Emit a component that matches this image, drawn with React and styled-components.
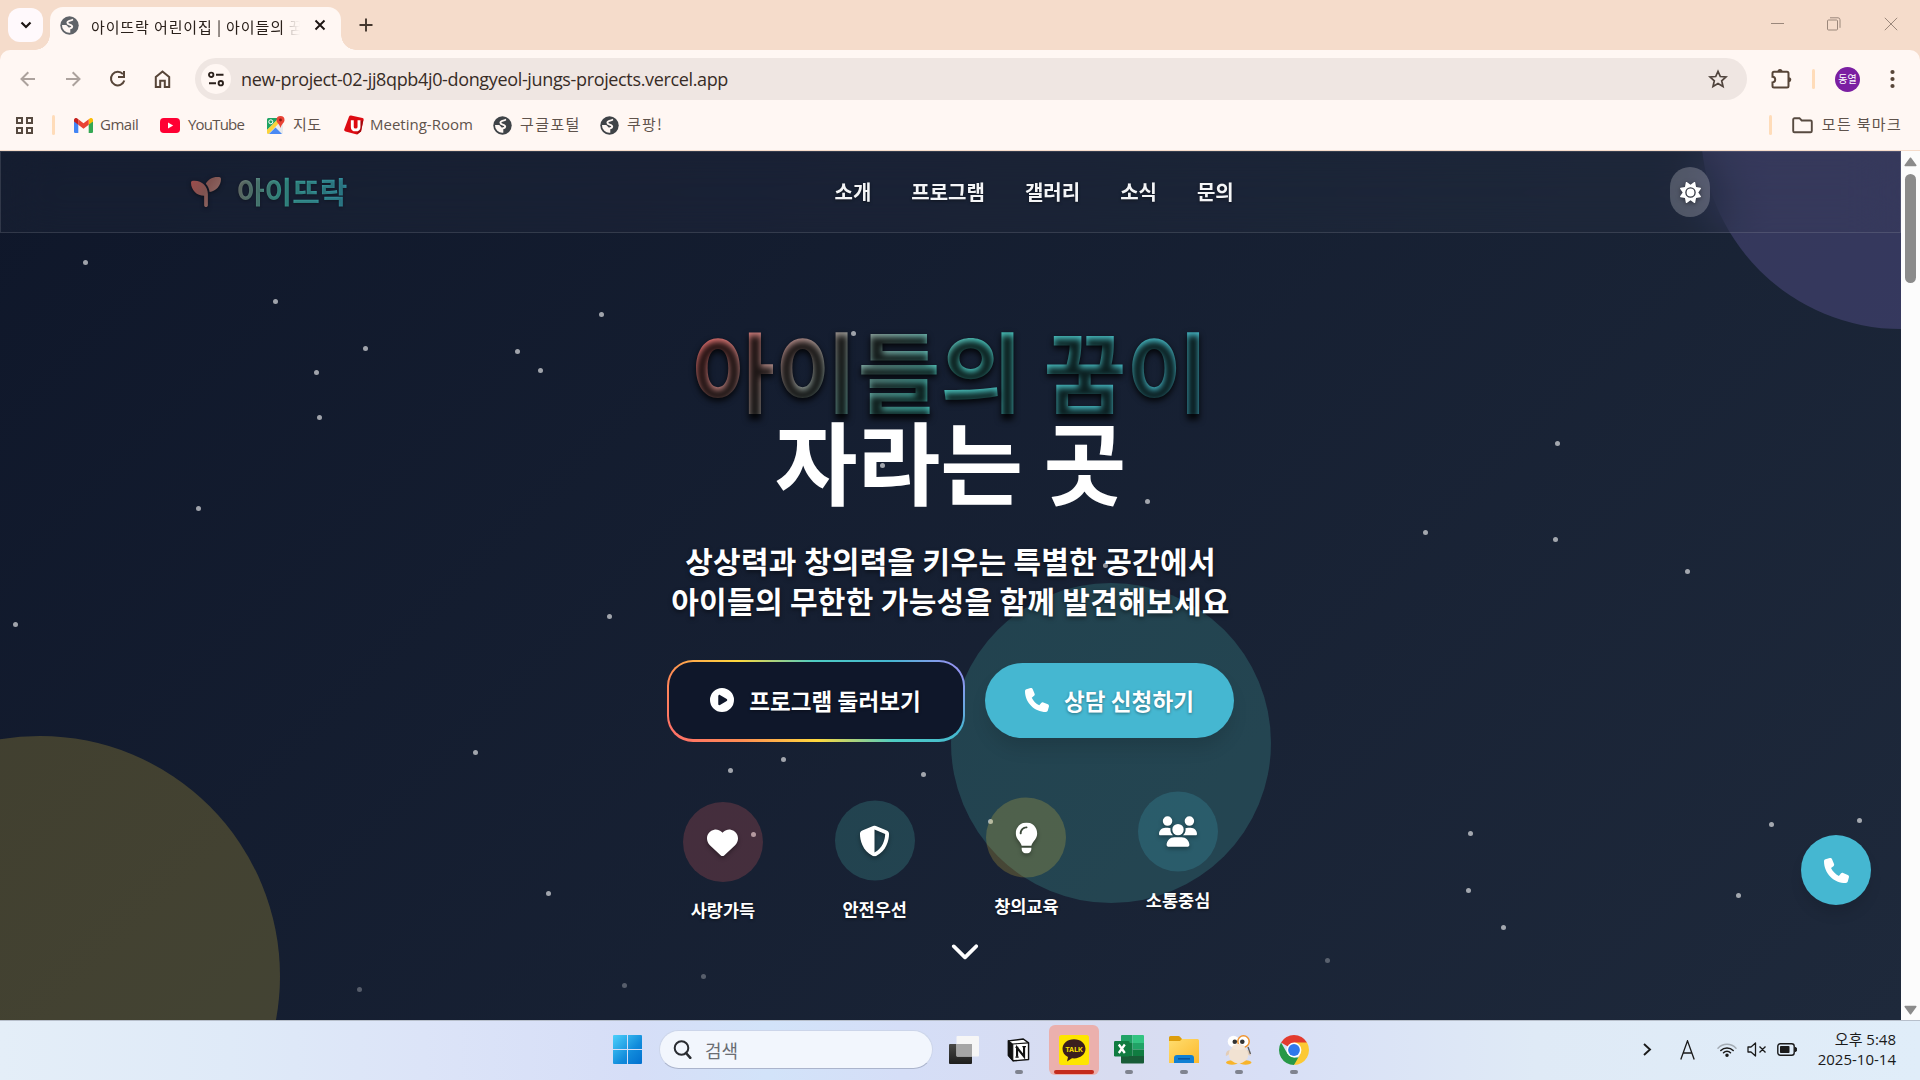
import React from 'react';
import styled, { createGlobalStyle, css } from 'styled-components';
import {
  FaSeedling, FaSun, FaCirclePlay, FaPhone, FaHeart, FaShieldHalved,
  FaLightbulb, FaUsers, FaChevronDown,
} from 'react-icons/fa6';

const UI_FONT = '"Open Sans", "Noto Sans CJK KR", sans-serif';
const KR_FONT = '"Noto Sans CJK KR", "Noto Sans", sans-serif';

const GlobalStyle = createGlobalStyle`
  * { box-sizing: border-box; }
  body { margin: 0; background: #0f172a; overflow: hidden; }
  svg { display: block; flex: none; }
`;

const Screen = styled.div`
  width: 1920px;
  height: 1080px;
  display: flex;
  flex-direction: column;
  overflow: hidden;
  font-family: ${UI_FONT};
`;

/* ---------- browser chrome ---------- */

const TabStrip = styled.div`
  height: 50px;
  background: #f5dccb;
  display: flex;
  align-items: flex-end;
  padding-left: 8px;
`;

const TabSearch = styled.div`
  width: 35px;
  height: 34px;
  margin: 0 7px 8px 0;
  border-radius: 12px;
  background: #fff9fc;
  display: flex;
  align-items: center;
  justify-content: center;
`;

const Tab = styled.div`
  position: relative;
  width: 291px;
  height: 43px;
  padding: 0 15px 7px 10px;
  border-radius: 13px 13px 0 0;
  background: #fff7f3;
  display: flex;
  align-items: center;
  &::before, &::after {
    content: '';
    position: absolute;
    bottom: 0;
    width: 15px;
    height: 15px;
  }
  &::before {
    left: -15px;
    background: radial-gradient(circle at 0 0, transparent 14.5px, #fff7f3 15px);
  }
  &::after {
    right: -15px;
    background: radial-gradient(circle at 100% 0, transparent 14.5px, #fff7f3 15px);
  }
`;

const TabTitle = styled.div`
  flex: 1;
  margin: 2px 14px 0 12px;
  overflow: hidden;
  white-space: nowrap;
  font-family: ${KR_FONT};
  font-weight: 400;
  font-size: 15px;
  letter-spacing: 0.88px;
  color: #2a201a;
  -webkit-mask-image: linear-gradient(90deg, #000 92%, rgba(0, 0, 0, 0.25) 95%, transparent 100%);
  mask-image: linear-gradient(90deg, #000 92%, rgba(0, 0, 0, 0.25) 95%, transparent 100%);
`;

const NewTab = styled.div`
  margin: 0 0 18px 18px;
`;

const WindowButtons = styled.div`
  margin-left: auto;
  align-self: flex-start;
  display: flex;
  gap: 43px;
  padding: 17px 22px 0 0;
  color: #9a877b;
`;

const ToolbarWrap = styled.div`
  height: 100px;
  background: #f5dccb;
`;

const Toolbar = styled.div`
  height: 100%;
  border-radius: 10px 10px 0 0;
  background: #fff7f3;
`;

const AddressRow = styled.div`
  height: 58px;
  display: flex;
  align-items: center;
  padding: 0 25px 0 18px;
`;

const NavIcons = styled.div`
  display: flex;
  gap: 25px;
  margin-right: 22px;
`;

const AddressBar = styled.div`
  flex: 1;
  height: 42px;
  border-radius: 21px;
  background: #efe6e2;
  display: flex;
  align-items: center;
  margin-right: 23px;
  padding: 0 19px 0 6px;
`;

const SiteInfo = styled.div`
  width: 30px;
  height: 30px;
  border-radius: 50%;
  background: #fff7f3;
  display: flex;
  align-items: center;
  justify-content: center;
`;

const Url = styled.div`
  flex: 1;
  margin-left: 10px;
  font-size: 18px;
  letter-spacing: -0.35px;
  color: #372c26;
`;

const Divider = styled.div`
  width: 3px;
  height: 20px;
  border-radius: 2px;
  background: #ffdcb9;
  margin: ${(p) => p.$margin || '0'};
`;

const Avatar = styled.div`
  width: 25px;
  height: 25px;
  border-radius: 50%;
  background: #7b1fa2;
  color: #fff;
  font-size: 10px;
  line-height: 24px;
  text-align: center;
  margin-right: 30px;
  white-space: nowrap;
`;

const BookmarkRow = styled.div`
  height: 34px;
  display: flex;
  align-items: center;
  padding: 0 18px 0 15px;
`;

const Bookmark = styled.div`
  display: flex;
  align-items: center;
  width: ${(p) => p.$width}px;
`;

const BookmarkText = styled.span`
  margin: -3px 0 0 ${(p) => p.$gap || 8}px;
  font-size: 15px;
  letter-spacing: ${(p) => p.$spacing || 0}px;
  color: #5f534c;
  white-space: nowrap;
  ${(p) => p.$kr && css`
    font-family: ${KR_FONT};
    font-weight: 400;
  `}
`;

/* ---------- web page ---------- */

const Viewport = styled.div`
  height: 870px;
  display: flex;
  border-top: 1px solid #f5dccb;
`;

const Page = styled.div`
  position: relative;
  flex: 1;
  overflow: hidden;
  background: linear-gradient(135deg, #0f172a 0%, #1e293b 100%);
  font-family: ${KR_FONT};
  color: #fff;
`;

const Backdrop = styled.div`
  position: absolute;
  inset: 0;
`;

const Orb = styled.div`
  position: absolute;
  left: ${(p) => p.$x - p.$r}px;
  top: ${(p) => p.$y - p.$r}px;
  width: ${(p) => p.$r * 2}px;
  height: ${(p) => p.$r * 2}px;
  border-radius: 50%;
  opacity: 0.2;
  background: ${(p) => p.$color};
`;

const Particle = styled.div`
  position: absolute;
  left: ${(p) => p.$x - 2.5}px;
  top: ${(p) => p.$y - 2.5}px;
  width: 5px;
  height: 5px;
  border-radius: 50%;
  background: rgba(255, 255, 255, ${(p) => (p.$dim ? 0.28 : 0.6)});
`;

const NavBar = styled.header`
  position: relative;
  height: 82px;
  padding: 0 190px;
  border: 1px solid rgba(255, 255, 255, 0.12);
  background: rgba(58, 70, 86, 0.15);
  backdrop-filter: blur(25px);
  display: flex;
  align-items: center;
`;

const Logo = styled.div`
  width: 643.5px;
  display: flex;
  align-items: center;
  font-size: 30px;
  line-height: 40px;
  font-weight: 700;
  padding-bottom: 1px;
`;

const LogoMark = styled.span`
  margin-right: 16px;
  filter: drop-shadow(0 1px 2px rgba(0, 0, 0, 0.5));
`;

const LogoText = styled.span`
  margin-top: -3px;
  background: linear-gradient(100deg, #7d7f78 0%, #3fa99f 40%, #3798ad 100%);
  -webkit-background-clip: text;
  background-clip: text;
  color: transparent;
  text-shadow: 0 1px 3px rgba(0, 0, 0, 0.3);
`;

const Menu = styled.nav`
  display: flex;
  gap: 40px;
  flex: 1;
  font-size: 20px;
  line-height: 30px;
  font-weight: 700;
  color: #f4f5f7;
  text-shadow: 0 1px 3px rgba(0, 0, 0, 0.5);
`;

const ThemeToggle = styled.button`
  width: 40px;
  height: 50px;
  padding: 0;
  border: 0;
  border-radius: 20px;
  background: rgba(255, 255, 255, 0.22);
  color: #fff;
  display: flex;
  align-items: center;
  justify-content: center;
  svg { filter: drop-shadow(0 1px 2px rgba(0, 0, 0, 0.5)); }
`;

const Hero = styled.main`
  position: relative;
  display: flex;
  flex-direction: column;
  align-items: center;
  padding-top: 91px;
`;

const Title = styled.h1`
  margin: 0;
  font-size: 90px;
  line-height: 90px;
  font-weight: 700;
  text-align: center;
`;

const TitleGradient = styled.span`
  display: block;
  background: linear-gradient(135deg, #ff6b6b, #4ecdc4, #45b7d1);
  -webkit-background-clip: text;
  background-clip: text;
  color: transparent;
  text-shadow: 0 3px 6px rgba(0, 0, 0, 0.85);
`;

const TitlePlain = styled.span`
  display: block;
`;

const Subtitle = styled.p`
  margin: 36px 0 40px;
  font-size: 30px;
  line-height: 40px;
  font-weight: 700;
  letter-spacing: 0.3px;
  text-align: center;
  text-shadow: 0 2px 4px rgba(0, 0, 0, 0.5);
`;

const Actions = styled.div`
  display: flex;
  align-items: center;
  gap: 20px;
  height: 82px;
`;

const button = css`
  border: 0;
  color: #fff;
  font-family: ${KR_FONT};
  font-size: 22.5px;
  font-weight: 700;
  letter-spacing: 0.1px;
  display: flex;
  align-items: center;
  justify-content: center;
  text-shadow: 0 1px 3px rgba(0, 0, 0, 0.4);
`;

const OutlineButton = styled.button`
  ${button}
  width: 298px;
  height: 82px;
  gap: 15px;
  padding: 0 1px 2px 0;
  border: 2px solid transparent;
  border-bottom-width: 3px;
  border-radius: 26px;
  background:
    linear-gradient(#0f172a, #0f172a) padding-box,
    linear-gradient(45deg, #ff6b6b, #ff8e53, #ffd93d, #4ecdc4, #45b7d1, #a78bfa) border-box;
`;

const SolidButton = styled.button`
  ${button}
  width: 249px;
  height: 75px;
  margin-bottom: 2px;
  gap: 15px;
  padding: 0;
  border-radius: 38px;
  background: #45b7d1;
  box-shadow: 0 12px 19px -4px rgba(0, 0, 0, 0.14);
`;

const Features = styled.ul`
  list-style: none;
  margin: 60px 0 0;
  padding: 0;
  display: flex;
  gap: 71.7px;
`;

const Feature = styled.li`
  width: 80px;
  display: flex;
  flex-direction: column;
  align-items: center;
  transform: translateY(${(p) => p.$lift}px);
`;

const FeatureIcon = styled.div`
  width: 80px;
  height: 80px;
  border-radius: 50%;
  background: ${(p) => p.$color};
  display: flex;
  align-items: center;
  justify-content: center;
  svg { filter: drop-shadow(0 2px 2px rgba(0, 0, 0, 0.35)); }
`;

const FeatureLabel = styled.div`
  margin-top: 15px;
  font-size: 17.5px;
  line-height: 25px;
  font-weight: 700;
  white-space: nowrap;
  text-shadow: 0 1px 3px rgba(0, 0, 0, 0.5);
`;

const ScrollHint = styled.div`
  margin: 13px 0 0 29px;
`;

const CallFab = styled.button`
  position: absolute;
  right: 30px;
  bottom: 115px;
  width: 70px;
  height: 70px;
  padding: 0;
  border: 0;
  border-radius: 50%;
  background: #45b7d1;
  color: #fff;
  display: flex;
  align-items: center;
  justify-content: center;
  box-shadow: 0 10px 16px -4px rgba(0, 0, 0, 0.14);
`;

const ScrollBar = styled.div`
  width: 19px;
  background: #fcfcfc;
  display: flex;
  flex-direction: column;
  align-items: center;
  padding: 6px 0 5px;
`;

const Thumb = styled.div`
  width: 11px;
  height: 109px;
  margin: 7px 0 auto;
  border-radius: 6px;
  background: #8b8b8b;
`;

/* ---------- taskbar ---------- */

const TaskBar = styled.footer`
  height: 60px;
  border-top: 1px solid #b7bfcb;
  background: linear-gradient(90deg, #e4eef8 0%, #dfeaf8 12%, #dce4f8 22%, #d6def7 33%, #d2e3f9 40%, #d5def7 47%, #d8dcf0 58%, #d8dff6 66%, #dfeaf6 80%, #e0edf9 100%);
  display: flex;
  align-items: center;
  padding: 0 24px 2px 600px;
`;

const TaskCell = styled.div`
  position: relative;
  width: 55px;
  height: 57px;
  display: flex;
  align-items: center;
  justify-content: center;
`;

const ActiveTile = styled.div`
  width: 50px;
  height: 50px;
  border-radius: 6px;
  background: #ebb0ad;
  display: flex;
  align-items: center;
  justify-content: center;
`;

const RunningMark = styled.div`
  position: absolute;
  bottom: 4px;
  left: 50%;
  width: ${(p) => (p.$active ? 40 : 8)}px;
  height: 4px;
  transform: translateX(-50%);
  border-radius: 2px;
  background: ${(p) => (p.$active ? '#c42b1c' : '#7f838f')};
`;

const SearchBox = styled.div`
  width: 274px;
  height: 39px;
  margin: 0 3px 0 4px;
  padding-left: 13px;
  border-radius: 20px;
  border: 1px solid #ccd5ea;
  border-bottom-color: #abb4cc;
  background: #f2f6fd;
  display: flex;
  align-items: center;
  gap: 13px;
  font-family: ${KR_FONT};
  font-weight: 400;
  font-size: 18px;
  color: #6a6d73;
`;

const Tray = styled.div`
  margin-left: auto;
  display: flex;
  align-items: center;
  color: #1a1a1a;
`;

const TrayIcon = styled.div`
  margin-right: ${(p) => p.$gap}px;
`;

const Clock = styled.div`
  width: 81px;
  font-size: 15px;
  line-height: 20px;
  text-align: right;
  white-space: nowrap;
  padding-bottom: 1px;
`;

/* ---------- drawings ---------- */

const Globe = ({ color = '#3f4347' }) => (
  <svg width="19" height="19" viewBox="0 0 19 19">
    <circle cx="9.5" cy="9.5" r="9.2" fill={color} />
    <path d="M2 9h4.200l2.300 2.200v1.600h1.800v3.900A7.300 7.300 0 0 1 2 9z" fill="#fff7f3" />
    <path d="M12.300 3.800c-1.200 1.200-4.900.5-4.900 2.900 0 2.500 4.800 1.200 4.800 3.900 0 1.800-1.900 1.700-3.400 1.900" fill="none" stroke="#fff7f3" strokeWidth="1.900" strokeLinecap="round" />
  </svg>
);

const BackArrow = ({ flip }) => (
  <svg width="20" height="20" viewBox="0 0 20 20" fill="none" stroke="#aca29d" strokeWidth="2" transform={flip ? 'scale(-1 1)' : undefined}>
    <path d="M17 10H4M10.3 3.2 3.5 10l6.8 6.8" />
  </svg>
);

const Reload = () => (
  <svg width="20" height="20" viewBox="0 0 20 20" fill="none" stroke="#574538" strokeWidth="2">
    <path d="M15 5.200A6.800 6.800 0 1 0 16.300 11.500" />
    <path d="M16 2v6h-6" />
  </svg>
);

const Home = () => (
  <svg width="20" height="20" viewBox="0 0 20 20" fill="none" stroke="#574538" strokeWidth="2">
    <path d="M2.800 18V8L9.500 2.500 16.200 8V18h-4.400v-6.200H7.200V18z" />
  </svg>
);

const Tune = () => (
  <svg width="16" height="16" viewBox="0 0 16 16" fill="none" stroke="#2b211c" strokeWidth="1.900">
    <circle cx="3.200" cy="3.800" r="2.200" />
    <path d="M8 3.800h7.500M1 12.200h7" />
    <circle cx="12.800" cy="12.200" r="2.200" />
  </svg>
);

const Star = () => (
  <svg width="20" height="20" viewBox="0 0 20 20" fill="none" stroke="#50443d" strokeWidth="1.700">
    <path d="m10 2.300 2.300 5.200 5.700.5-4.300 3.800 1.300 5.600-5-3-5 3 1.300-5.600L2 8l5.700-.5z" />
  </svg>
);

const Puzzle = () => (
  <svg width="22" height="22" viewBox="0 0 22 22">
    <path d="M2.500 5.200a1.500 1.500 0 0 1 1.500-1.500h13a1.500 1.500 0 0 1 1.500 1.500V18a1.500 1.500 0 0 1-1.500 1.500H4A1.500 1.500 0 0 1 2.500 18v-3.600c1.700 0 2.700-1.200 2.700-2.800s-1-2.800-2.700-2.800z" fill="none" stroke="#574538" strokeWidth="2" />
    <path d="M7.500 3.500a2.500 2.500 0 0 1 5 0zM18.800 9.200a2.500 2.500 0 0 1 0 5z" fill="#574538" />
  </svg>
);

const Dots = () => (
  <svg width="5" height="20" viewBox="0 0 5 20" fill="#574538">
    <circle cx="2.500" cy="3" r="2.100" /><circle cx="2.500" cy="10" r="2.100" /><circle cx="2.500" cy="17" r="2.100" />
  </svg>
);

const AppsGrid = () => (
  <svg width="19" height="19" viewBox="0 0 19 19" fill="none" stroke="#574a40" strokeWidth="2">
    <path d="M2 2h5v5H2zM12 2h5v5h-5zM2 12h5v5H2zM12 12h5v5h-5z" />
  </svg>
);

const Gmail = () => (
  <svg width="19" height="15" viewBox="0 0 19 15">
    <path d="M0 3v10.500A1.300 1.300 0 0 0 1.300 15H4.300V5.500z" fill="#4285f4" />
    <path d="M14.700 5.500V15h3a1.300 1.300 0 0 0 1.300-1.500V3z" fill="#34a853" />
    <path d="M14.700 1.200v5.500L19 3.500V2c0-1.800-2-2.600-3.300-1.600z" fill="#fbbc04" />
    <path d="M4.300 6.700V1.200l5.200 4 5.200-4v5.500l-5.200 4z" fill="#ea4335" />
    <path d="M0 2v1.500l4.300 3.200V1.200L3.300.4C2-.6 0 .2 0 2z" fill="#c5221f" />
  </svg>
);

const YouTube = () => (
  <svg width="20" height="15" viewBox="0 0 20 15">
    <rect width="20" height="15" rx="3.800" fill="#ff0033" />
    <path d="m8 4.500 5.200 3L8 10.500z" fill="#fff" />
  </svg>
);

const Maps = () => (
  <svg width="19" height="19" viewBox="0 0 19 19">
    <rect x="1" y="2" width="16" height="16" rx="1.500" fill="#e8eaed" />
    <path d="M1 3.500A1.500 1.500 0 0 1 2.500 2H13L1 14z" fill="#1ea362" />
    <path d="M1 14 12.500 2.500l2.500 2.500L2.500 18A1.500 1.500 0 0 1 1 16.500z" fill="#fbd33b" />
    <path d="M3 18l6.500-6.500L16 18z" fill="#4a89f3" />
    <circle cx="4.800" cy="5.800" r="2" fill="none" stroke="#fff" strokeWidth="1" />
    <path d="M14.500 0a4 4 0 0 1 4 4c0 2.800-3.200 4.200-4 8-.8-3.800-4-5.200-4-8a4 4 0 0 1 4-4z" fill="#ea4335" />
    <circle cx="14.500" cy="4" r="1.400" fill="#8c1a12" />
  </svg>
);

const Meeting = () => (
  <svg width="20" height="20" viewBox="0 0 20 20">
    <path d="M7 .6 18.500 3c.8.2 1.200.8 1.100 1.600L17 16.500l-4 3L1.500 16.500C.6 16.200 0 15.500.2 14.600L5 1.800C5.400.8 6 .4 7 .6z" fill="#dd0b12" />
    <path d="M16 6.500l3.300-1.500L17 16.500l-4 3z" fill="#a3070c" />
    <path d="M8.300 5.300v6.600c0 4 6.700 4 6.700 0V5.300" fill="none" stroke="#fff" strokeWidth="2.900" />
  </svg>
);

const Folder = () => (
  <svg width="21" height="17" viewBox="0 0 21 17" fill="none" stroke="#574a40" strokeWidth="1.900">
    <path d="M1.200 2.500A1.300 1.300 0 0 1 2.500 1.200h5l2.200 2.300h8.800a1.300 1.300 0 0 1 1.300 1.300v9.200a1.300 1.300 0 0 1-1.300 1.300h-16A1.300 1.300 0 0 1 1.200 14z" />
  </svg>
);

const Triangle = ({ down }) => (
  <svg width="13" height="10" viewBox="0 0 13 10" transform={down ? 'scale(1 -1)' : undefined}>
    <path d="M6.500 1.200 11.800 8.500H1.200z" fill="#8b8b8b" stroke="#8b8b8b" strokeWidth="1.500" strokeLinejoin="round" />
  </svg>
);

const GradientDefs = styled.svg`
  position: absolute;
  width: 0;
  height: 0;
`;

const RainbowSeedling = () => (
  <>
    <GradientDefs>
      <defs>
        <linearGradient id="leaf" x1="0" y1="0" x2="1" y2="0.6">
          <stop offset="0" stopColor="#a04b4b" />
          <stop offset="0.55" stopColor="#7f5350" />
          <stop offset="1" stopColor="#906a66" />
        </linearGradient>
      </defs>
    </GradientDefs>
    <FaSeedling size={30} fill="url(#leaf)" />
  </>
);

const WindowsLogo = () => (
  <svg width="29" height="29" viewBox="0 0 29 29">
    <defs>
      <linearGradient id="win" x1="0" y1="0" x2="1" y2="1">
        <stop offset="0" stopColor="#4cd0fb" />
        <stop offset="0.6" stopColor="#118bdb" />
        <stop offset="1" stopColor="#0270cf" />
      </linearGradient>
    </defs>
    <path d="M1 0h13v14H0V1a1 1 0 0 1 1-1zM15 0h13a1 1 0 0 1 1 1v13H15zM0 15h14v14H1a1 1 0 0 1-1-1zM15 15h14v13a1 1 0 0 1-1 1H15z" fill="url(#win)" />
  </svg>
);

const Magnifier = () => (
  <svg width="19" height="19" viewBox="0 0 19 19" fill="none" stroke="#2a2c31">
    <circle cx="8.500" cy="8" r="6.800" strokeWidth="2" />
    <path d="m13 13 4.300 4.800" strokeWidth="2.600" strokeLinecap="round" />
  </svg>
);

const TaskView = () => (
  <svg width="30" height="28" viewBox="0 0 30 28">
    <defs>
      <linearGradient id="tv" x1="0" y1="0" x2="0" y2="1">
        <stop offset="0" stopColor="#484846" />
        <stop offset="1" stopColor="#1e1e1d" />
      </linearGradient>
    </defs>
    <rect x="0" y="8" width="23" height="20" rx="1" fill="url(#tv)" />
    <rect x="7.500" y="0" width="22.500" height="20.500" rx="1" fill="#f6f6f6" />
    <path d="M7.500 8H23v12.500H7.500z" fill="#a6a6a6" />
  </svg>
);

const Notion = () => (
  <svg width="23" height="24" viewBox="0 0 24 25">
    <path d="M1.500 3 17 1l5.500 4v17.500L6.500 23.800l-5-5.500z" fill="#fff" stroke="#111" strokeWidth="1.500" strokeLinejoin="round" />
    <path d="M1.500 3 6 6.500v16.800l-4.500-5.200zM6 6.200l16.500-1.200" fill="#111" stroke="#111" strokeWidth="1.200" />
    <path d="M10.500 19.500V10.200l7.300 9V9.300" fill="none" stroke="#111" strokeWidth="2.200" />
    <path d="M8.800 9.700h3M8.800 19.900h3.400M16 9h3.800" stroke="#111" strokeWidth="1.300" />
  </svg>
);

const Kakao = () => (
  <svg width="30" height="30" viewBox="0 0 30 30">
    <rect width="30" height="30" rx="2.500" fill="#fee500" />
    <path d="M15 4.200c6.600 0 11.500 4.200 11.500 9.600S21.600 23.400 15 23.400c-.7 0-1.300 0-2-.1L8 26.500l1-4.400c-3.500-1.600-5.500-4.700-5.500-8.300C3.500 8.400 8.400 4.200 15 4.200z" fill="#3b1e1e" />
    <text x="15" y="16.600" textAnchor="middle" fontFamily="Inter, sans-serif" fontWeight="700" fontSize="6.800" fill="#fee500">TALK</text>
  </svg>
);

const Excel = () => (
  <svg width="30" height="29" viewBox="0 0 30 29">
    <path d="M7 1a1 1 0 0 1 1-1h10.500v8H7z" fill="#21a366" />
    <path d="M18.500 0H29a1 1 0 0 1 1 1v7H18.500z" fill="#33c481" />
    <path d="M7 8h11.500v13H7z" fill="#107c41" />
    <path d="M18.500 8H30v6.500H18.500z" fill="#21a366" />
    <path d="M18.500 14.500H30V21H18.500z" fill="#107c41" />
    <path d="M7 21h23v6.500a1 1 0 0 1-1 1H8a1 1 0 0 1-1-1z" fill="#185c37" />
    <rect x="0" y="6" width="15.500" height="15.500" rx="1.200" fill="#107c41" />
    <path d="m4.800 9.500 6 8.500M10.800 9.500l-6 8.500" stroke="#fff" strokeWidth="2.300" />
  </svg>
);

const Explorer = () => (
  <svg width="30" height="27" viewBox="0 0 30 27">
    <defs>
      <linearGradient id="fold" x1="0" y1="0" x2="1" y2="1">
        <stop offset="0" stopColor="#ffdd6f" />
        <stop offset="1" stopColor="#fcb92c" />
      </linearGradient>
    </defs>
    <path d="M0 1.500A1.500 1.500 0 0 1 1.500 0h8a2 2 0 0 1 1.500.7L13 3v5H0z" fill="#dd9d0c" />
    <path d="M0 5h11l2-2h15.500A1.500 1.500 0 0 1 30 4.500V27H0z" fill="url(#fold)" />
    <path d="M5 27v-5a3 3 0 0 1 3-3h14a3 3 0 0 1 3 3v5z" fill="#1180d3" />
    <path d="M9 22.800h12" stroke="#0a55a0" strokeWidth="1.600" />
  </svg>
);

const Duck = () => (
  <svg width="28" height="30" viewBox="0 0 28 30">
    <ellipse cx="7" cy="27.500" rx="6" ry="2.200" fill="#f8b42a" />
    <ellipse cx="20.500" cy="27.500" rx="6" ry="2.200" fill="#f8b42a" />
    <path d="M4.500 15C1 16 .5 19 1 21l4-2zM22 15c3.500 1 4 4 3.500 6l-4-2z" fill="#e2cdb9" />
    <ellipse cx="13.500" cy="19.500" rx="9.800" ry="9" fill="#f1e2d2" />
    <circle cx="8.500" cy="6.500" r="5.800" fill="#fff" />
    <circle cx="18.500" cy="6.500" r="5.700" fill="#fff" stroke="#ef9430" strokeWidth="1.500" />
    <ellipse cx="13.500" cy="12" rx="6.500" ry="3" fill="#f6e7d8" />
    <circle cx="9.800" cy="6.700" r="2.300" fill="#333" />
    <circle cx="17.300" cy="6.700" r="2.300" fill="#333" />
    <path d="M23 12l2.500 7" stroke="#5a5a5a" strokeWidth="1.300" />
  </svg>
);

const Chrome = () => (
  <svg width="30" height="30" viewBox="0 0 30 30">
    <path d="M15 15 2.010 7.500A15 15 0 0 1 27.990 7.500z" fill="#e33b2e" />
    <path d="M2.010 7.500 8.500 18.750 15 22.500h6.500L15 30A15 15 0 0 1 2.010 7.500z" fill="#279847" />
    <path d="M21.500 18.750 15 30A15 15 0 0 0 27.990 7.500H15z" fill="#fcc934" />
    <circle cx="15" cy="15" r="7.400" fill="#fff" />
    <circle cx="15" cy="15" r="5.900" fill="#3078ec" />
  </svg>
);

const Wifi = () => (
  <svg width="20" height="15" viewBox="0 0 20 15" fill="none" stroke="currentColor" strokeWidth="1.500" strokeLinecap="round">
    <path d="M1 6.200a12.500 12.500 0 0 1 18 0" opacity="0.300" />
    <path d="M3.800 8.500a8.800 8.800 0 0 1 12.400 0M6.500 10.800a5 5 0 0 1 7 0" />
    <circle cx="10" cy="13.200" r="1" fill="currentColor" />
  </svg>
);

const Muted = () => (
  <svg width="20" height="15" viewBox="0 0 20 15" fill="none" stroke="currentColor" strokeWidth="1.300" strokeLinejoin="round">
    <path d="M1 5h3l4.500-4v13L4 10H1zM12.500 4.500l6 6M18.500 4.500l-6 6" />
  </svg>
);

const Battery = () => (
  <svg width="20" height="13" viewBox="0 0 20 13">
    <rect x="0.800" y="0.800" width="16.400" height="11.400" rx="2.500" fill="none" stroke="currentColor" strokeWidth="1.400" />
    <rect x="3" y="3" width="9.500" height="7" rx="0.800" fill="currentColor" />
    <path d="M18 4.500a2 2 0 0 1 0 4z" fill="currentColor" stroke="currentColor" />
  </svg>
);

/* ---------- data ---------- */

const particles = [
  [85, 262], [275, 301], [601, 314], [365, 348], [517, 351], [316, 372], [540, 370], [319, 417],
  [198, 508], [609, 616], [15, 624], [475, 752], [730, 770], [783, 759], [923, 774], [548, 893],
  [753, 834], [990, 821], [624, 985, true], [703, 976, true], [359, 989, true], [853, 333],
  [882, 465], [1147, 501], [1557, 443], [1425, 532], [1555, 539], [1687, 571], [1470, 833],
  [1468, 890], [1503, 927], [1771, 824], [1859, 820], [1738, 895], [1327, 960, true], [1105, 565],
];

const orbs = [
  { x: 40, y: 825, r: 240, color: '#ffd93d' },
  { x: 1111, y: 592, r: 160, color: '#4ecdc4' },
  { x: 1901, y: -22, r: 200, color: '#a78bfa' },
];

const features = [
  { label: '사랑가득', color: 'rgba(255,107,107,0.2)', lift: 0, icon: <FaHeart size={31} /> },
  { label: '안전우선', color: 'rgba(78,205,196,0.2)', lift: -1.5, icon: <FaShieldHalved size={31} /> },
  { label: '창의교육', color: 'rgba(255,217,61,0.2)', lift: -4.5, icon: <FaLightbulb size={31} /> },
  { label: '소통중심', color: 'rgba(69,183,209,0.2)', lift: -10.5, icon: <FaUsers size={38} /> },
];

const tasks = [
  { icon: <TaskView /> },
  { icon: <Notion />, running: true },
  { icon: <Kakao />, active: true },
  { icon: <Excel />, running: true },
  { icon: <Explorer />, running: true },
  { icon: <Duck />, running: true },
  { icon: <Chrome />, running: true },
];

export default function App() {
  return (
    <Screen>
      <GlobalStyle />
      <TabStrip>
        <TabSearch>
          <svg width="12" height="8" viewBox="0 0 12 8" fill="none" stroke="#1c1512" strokeWidth="2.200"><path d="m1.500 1.500 4.500 4.500 4.500-4.500" /></svg>
        </TabSearch>
        <Tab>
          <Globe color="#5f6368" />
          <TabTitle>아이뜨락 어린이집 | 아이들의 꿈이</TabTitle>
          <svg width="12" height="12" viewBox="0 0 12 12" stroke="#1c1512" strokeWidth="1.900"><path d="m1.500 1.500 9 9M10.500 1.500l-9 9" /></svg>
        </Tab>
        <NewTab>
          <svg width="14" height="14" viewBox="0 0 14 14" stroke="#44372e" strokeWidth="1.900"><path d="M7 0.500v13M0.500 7h13" /></svg>
        </NewTab>
        <WindowButtons>
          <svg width="13" height="14" viewBox="0 0 13 14" stroke="currentColor"><path d="M0 6.500h13" /></svg>
          <svg width="14" height="14" viewBox="0 0 14 14" fill="none" stroke="currentColor"><rect x="0.500" y="3" width="10" height="10" rx="1" /><path d="M3 0.800h8a2 2 0 0 1 2 2v8" /></svg>
          <svg width="14" height="14" viewBox="0 0 14 14" stroke="currentColor"><path d="m0.800 0.800 12.400 12.400M13.200 0.800 0.800 13.200" /></svg>
        </WindowButtons>
      </TabStrip>

      <ToolbarWrap>
        <Toolbar>
          <AddressRow>
            <NavIcons><BackArrow /><BackArrow flip /><Reload /><Home /></NavIcons>
            <AddressBar>
              <SiteInfo><Tune /></SiteInfo>
              <Url>new-project-02-jj8qpb4j0-dongyeol-jungs-projects.vercel.app</Url>
              <Star />
            </AddressBar>
            <Puzzle />
            <Divider $margin="0 20px" />
            <Avatar>동열</Avatar>
            <Dots />
          </AddressRow>
          <BookmarkRow>
            <AppsGrid />
            <Divider $margin="0 19px 0 18px" />
            <Bookmark $width={86}><Gmail /><BookmarkText $gap={7} $spacing={-0.5}>Gmail</BookmarkText></Bookmark>
            <Bookmark $width={106}><YouTube /><BookmarkText $spacing={-0.8}>YouTube</BookmarkText></Bookmark>
            <Bookmark $width={78}><Maps /><BookmarkText $kr $spacing={0.5}>지도</BookmarkText></Bookmark>
            <Bookmark $width={149}><Meeting /><BookmarkText $gap={6}>Meeting-Room</BookmarkText></Bookmark>
            <Bookmark $width={107}><Globe /><BookmarkText $kr $gap={8} $spacing={1.4}>구글포털</BookmarkText></Bookmark>
            <Bookmark $width={70}><Globe /><BookmarkText $kr $gap={8} $spacing={1.2}>쿠팡!</BookmarkText></Bookmark>
            <Divider $margin="0 20px 0 auto" />
            <Folder />
            <BookmarkText $kr $gap={9} $spacing={1.3}>모든 북마크</BookmarkText>
          </BookmarkRow>
        </Toolbar>
      </ToolbarWrap>

      <Viewport>
        <Page>
          <Backdrop>
            {orbs.map((o) => <Orb key={o.color} $x={o.x} $y={o.y} $r={o.r} $color={o.color} />)}
            {particles.map(([x, y, dim]) => <Particle key={`${x}-${y}`} $x={x} $y={y - 151} $dim={dim} />)}
          </Backdrop>

          <NavBar>
            <Logo>
              <LogoMark><RainbowSeedling /></LogoMark>
              <LogoText>아이뜨락</LogoText>
            </Logo>
            <Menu>
              {['소개', '프로그램', '갤러리', '소식', '문의'].map((m) => <span key={m}>{m}</span>)}
            </Menu>
            <ThemeToggle><FaSun size={21} /></ThemeToggle>
          </NavBar>

          <Hero>
            <Title>
              <TitleGradient>아이들의 꿈이</TitleGradient>
              <TitlePlain>자라는 곳</TitlePlain>
            </Title>
            <Subtitle>
              상상력과 창의력을 키우는 특별한 공간에서<br />
              아이들의 무한한 가능성을 함께 발견해보세요
            </Subtitle>
            <Actions>
              <OutlineButton><FaCirclePlay size={24} />프로그램 둘러보기</OutlineButton>
              <SolidButton><FaPhone size={24} />상담 신청하기</SolidButton>
            </Actions>
            <Features>
              {features.map((f) => (
                <Feature key={f.label} $lift={f.lift}>
                  <FeatureIcon $color={f.color}>{f.icon}</FeatureIcon>
                  <FeatureLabel>{f.label}</FeatureLabel>
                </Feature>
              ))}
            </Features>
            <ScrollHint><FaChevronDown size={30} /></ScrollHint>
          </Hero>

          <CallFab><FaPhone size={25} /></CallFab>
        </Page>
        <ScrollBar>
          <Triangle />
          <Thumb />
          <Triangle down />
        </ScrollBar>
      </Viewport>

      <TaskBar>
        <TaskCell><WindowsLogo /></TaskCell>
        <SearchBox><Magnifier />검색</SearchBox>
        {tasks.map((t, i) => (
          <TaskCell key={i}>
            {t.active ? <ActiveTile>{t.icon}</ActiveTile> : t.icon}
            {(t.running || t.active) && <RunningMark $active={t.active} />}
          </TaskCell>
        ))}
        <Tray>
          <TrayIcon $gap={28}>
            <svg width="9" height="13" viewBox="0 0 9 13" fill="none" stroke="currentColor" strokeWidth="1.900"><path d="m1 1 6 5.500L1 12" /></svg>
          </TrayIcon>
          <TrayIcon $gap={22}>
            <svg width="15" height="20" viewBox="0 0 15 20" fill="none" stroke="currentColor" strokeWidth="1.300"><path d="M0.800 19.500 7.500 0.800l6.700 18.700M3.200 13h8.600" /></svg>
          </TrayIcon>
          <TrayIcon $gap={10}><Wifi /></TrayIcon>
          <TrayIcon $gap={10}><Muted /></TrayIcon>
          <TrayIcon $gap={18}><Battery /></TrayIcon>
          <Clock>오후 5:48<br />2025-10-14</Clock>
        </Tray>
      </TaskBar>
    </Screen>
  );
}
